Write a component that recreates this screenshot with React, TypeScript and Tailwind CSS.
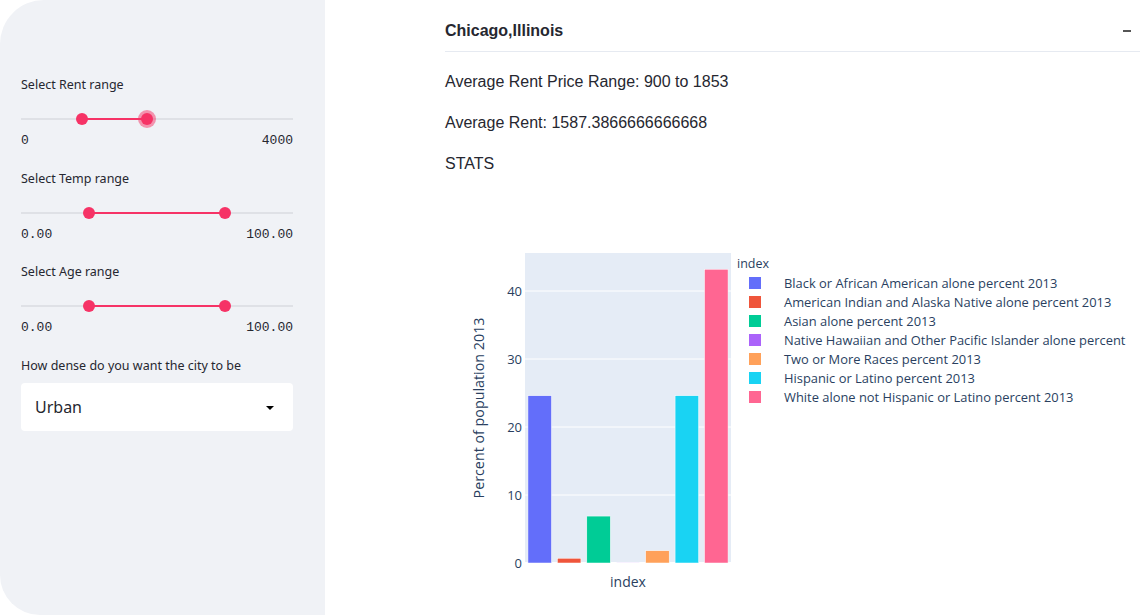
import React from "react";

const bars = [
  { label: "Black or African American alone percent 2013", value: 24.6, color: "#636efa" },
  { label: "American Indian and Alaska Native alone percent 2013", value: 0.7, color: "#ef553b" },
  { label: "Asian alone percent 2013", value: 6.9, color: "#00cc96" },
  { label: "Native Hawaiian and Other Pacific Islander alone percent", value: 0.05, color: "#ab63fa" },
  { label: "Two or More Races percent 2013", value: 1.8, color: "#ffa15a" },
  { label: "Hispanic or Latino percent 2013", value: 24.6, color: "#19d3f3" },
  { label: "White alone not Hispanic or Latino percent 2013", value: 43.2, color: "#ff6692" },
];

type SliderProps = {
  label: string;
  min: number;
  max: number;
  low: number;
  high: number;
  minText: string;
  maxText: string;
  focused?: boolean;
};

const RangeSlider = ({ label, min, max, low, high, minText, maxText, focused }: SliderProps) => {
  const lo = ((low - min) / (max - min)) * 100;
  const hi = ((high - min) / (max - min)) * 100;
  return (
    <div className="mb-[20px]">
      <div className="h-5 leading-5 text-[12.5px] text-[#262730]">{label}</div>
      <div className="relative h-[36px]">
        <div className="absolute left-0 right-0 top-[23px] h-[2px] bg-[#dfe1e6]" />
        <div
          className="absolute top-[23px] h-[2px] bg-[#f63366]"
          style={{ left: `${lo}%`, width: `${hi - lo}%` }}
        />
        <div
          className="absolute top-[18px] w-3 h-3 -ml-1.5 rounded-full bg-[#f63366]"
          style={{ left: `${lo}%` }}
        />
        <div
          className={`absolute top-[18px] w-3 h-3 -ml-1.5 rounded-full bg-[#f63366] ${focused ? "ring-[3px] ring-[#f6336680]" : ""}`}
          style={{ left: `${hi}%` }}
        />
      </div>
      <div className="mt-[2px] flex justify-between h-4 leading-4 text-[13px] text-[#262730] font-['Liberation_Mono',monospace]">
        <span>{minText}</span>
        <span>{maxText}</span>
      </div>
    </div>
  );
};

const Chart = () => {
  // svg origin sits at page (445, 180)
  const x0 = 80;
  const x1 = 286;
  const y0 = 382;
  const scale = 6.8;
  const step = (x1 - x0) / bars.length;
  const bw = step * 0.8;
  return (
    <svg width={695} height={435} className="block" style={{ fontFamily: "'Open Sans', sans-serif" }}>
      <rect x={x0} y={72} width={x1 - x0} height={y0 - 72} fill="#e5ecf6" />
      {[10, 20, 30, 40].map((v) => (
        <line key={v} x1={x0} x2={x1} y1={y0 - v * scale} y2={y0 - v * scale} stroke="#ffffff" strokeWidth={1} />
      ))}
      <line x1={x0} x2={x1} y1={y0} y2={y0} stroke="#ffffff" strokeWidth={2} />
      {[0, 10, 20, 30, 40].map((v) => (
        <text key={v} x={x0 - 3} y={y0 - v * scale + 4.5} textAnchor="end" fontSize={13} fill="#2a3f5f">
          {v}
        </text>
      ))}
      {bars.map((b, i) => {
        const h = b.value * scale;
        return (
          <rect
            key={b.label}
            x={x0 + i * step + (step - bw) / 2}
            y={y0 - h}
            width={bw}
            height={h}
            fill={b.color}
            stroke="#ffffff"
            strokeWidth={0.5}
          />
        );
      })}
      <text
        x={0}
        y={0}
        transform="translate(39 227) rotate(-90)"
        textAnchor="middle"
        fontSize={14.3}
        fill="#2a3f5f"
      >
        Percent of population 2013
      </text>
      <text x={183} y={406} textAnchor="middle" fontSize={14} fill="#2a3f5f">
        index
      </text>
      <text x={292} y={87} fontSize={12.5} fill="#2a3f5f">
        index
      </text>
      {bars.map((b, i) => (
        <g key={b.label}>
          <rect x={304} y={96 + i * 19} width={12} height={12} fill={b.color} />
          <text x={339} y={106.5 + i * 19} fontSize={12.9} fill="#2a3f5f">
            {b.label}
          </text>
        </g>
      ))}
    </svg>
  );
};

export default function App() {
  return (
    <div className="flex w-full h-screen bg-white overflow-hidden font-['Liberation_Sans',Arial,sans-serif]">
      {/* Sidebar */}
      <div className="w-[325px] shrink-0 bg-[#f0f2f6] rounded-tl-[44px] rounded-bl-[40px] pt-[75px] pl-[21px] pr-[32px] font-['Noto_Sans',sans-serif]">
        <RangeSlider label="Select Rent range" min={0} max={4000} low={900} high={1853} minText="0" maxText="4000" focused />
        <RangeSlider label="Select Temp range" min={0} max={100} low={25} high={75} minText="0.00" maxText="100.00" />
        <div className="-mt-px">
          <RangeSlider label="Select Age range" min={0} max={100} low={25} high={75} minText="0.00" maxText="100.00" />
        </div>
        <div className="h-5 leading-5 text-[12.5px] text-[#262730]">How dense do you want the city to be</div>
        <div className="mt-[7px] h-12 bg-white rounded flex items-center justify-between pl-[14px] pr-[19px]">
          <span className="text-[16px] text-[#262730]">Urban</span>
          <span className="w-0 h-0 mt-[2px] border-l-[4px] border-r-[4px] border-t-[4px] border-l-transparent border-r-transparent border-t-black" />
        </div>
      </div>

      {/* Main */}
      <div className="flex-1 pl-[120px]">
        <div className="flex items-center justify-between h-[52px] pt-[10px] border-b border-[#e6eaf1] pr-[9px]">
          <span className="text-[16px] font-semibold text-[#262730]">Chicago,Illinois</span>
          <span className="w-2 h-[2px] bg-[#555]" />
        </div>
        <div className="text-[16px] text-[#262730]">
          <p className="mt-[19px] leading-[22px]">Average Rent Price Range: 900 to 1853</p>
          <p className="mt-[19px] leading-[22px]">Average Rent: 1587.3866666666668</p>
          <p className="mt-[19px] leading-[22px]">STATS</p>
        </div>
        <div className="mt-[6px]">
          <Chart />
        </div>
      </div>
    </div>
  );
}
